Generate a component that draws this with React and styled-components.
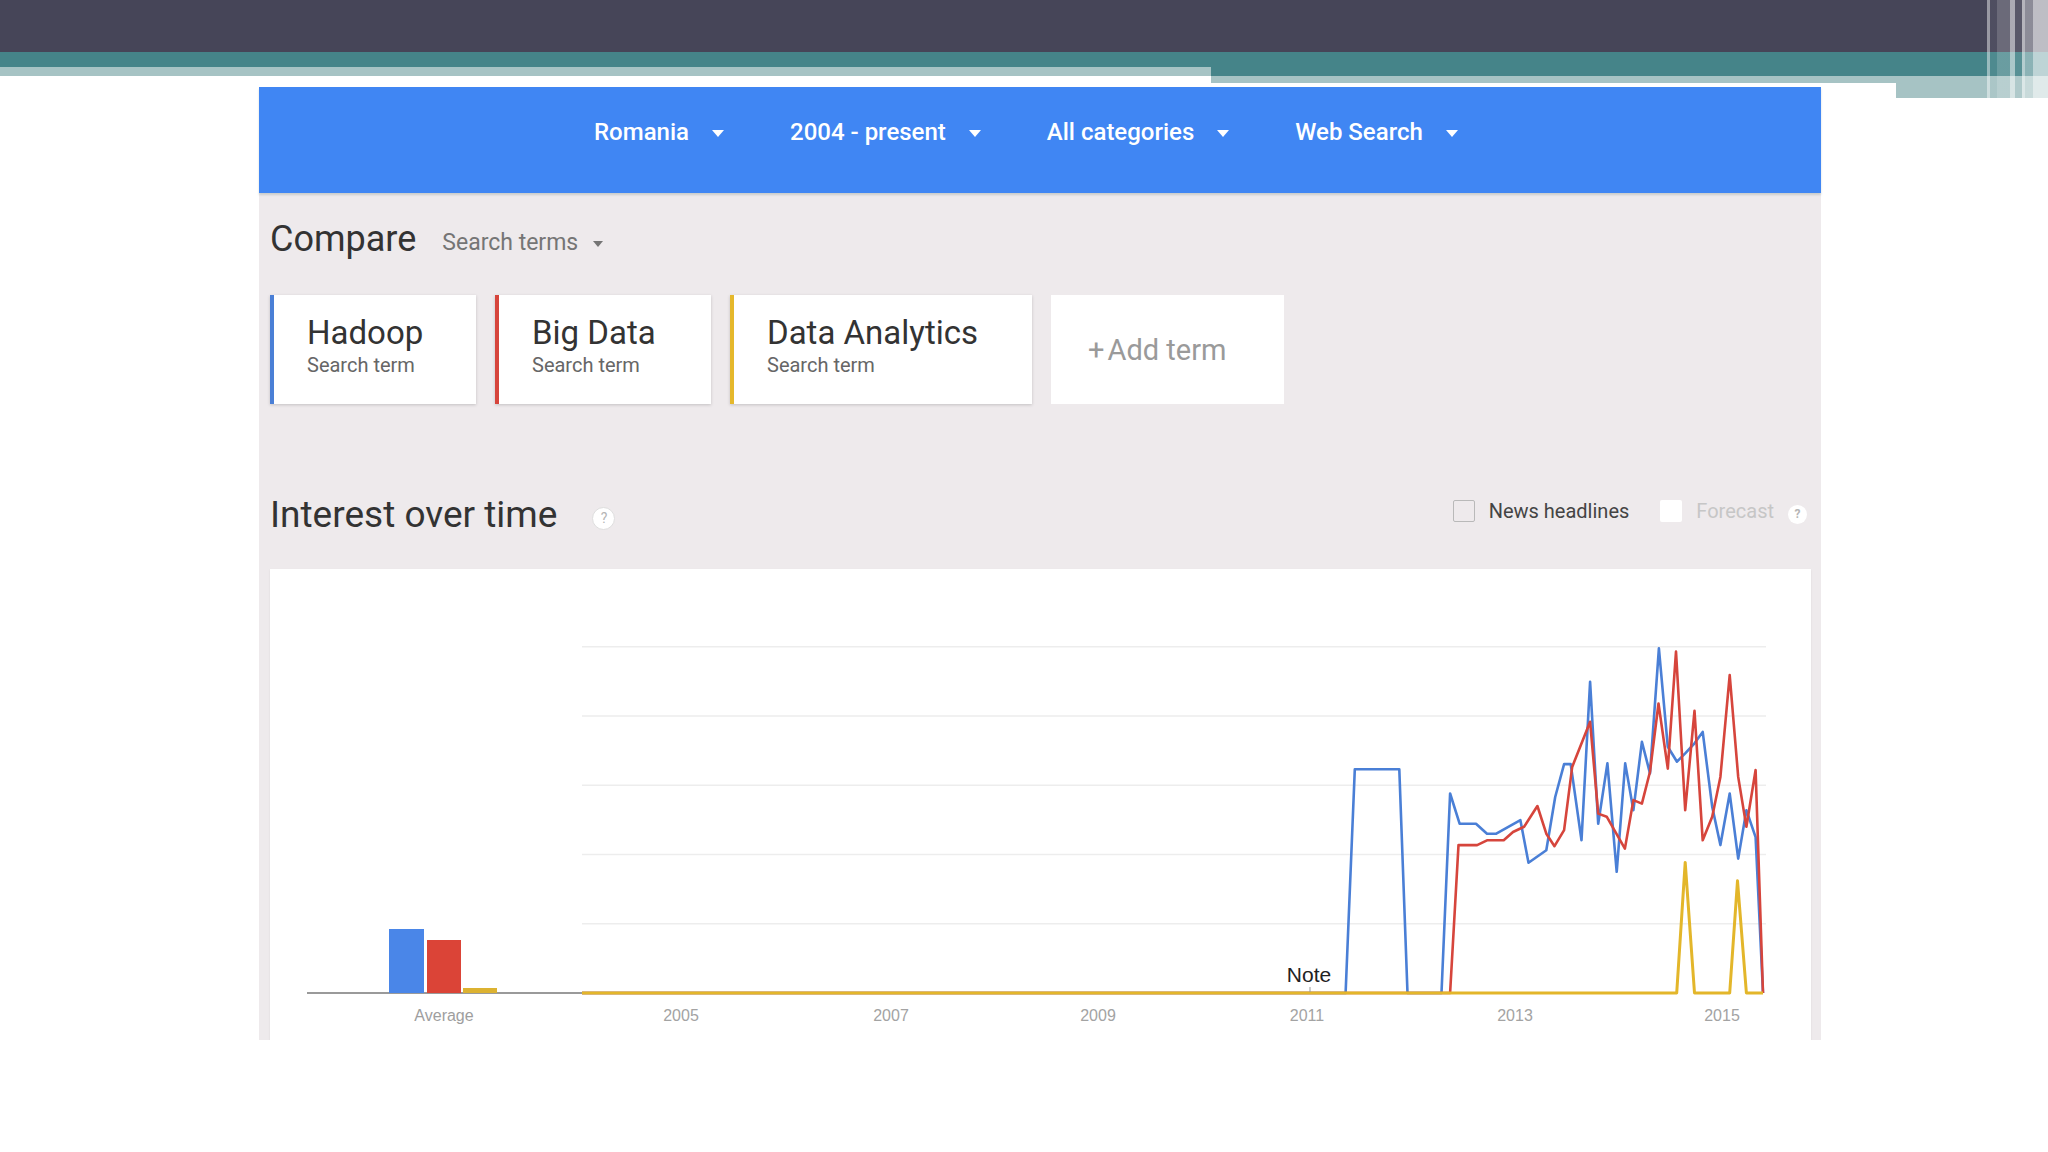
import React from 'react'
import styled, { createGlobalStyle } from 'styled-components'

const GlobalStyle = createGlobalStyle`
  html, body {
    margin: 0;
    padding: 0;
    background: #fff;
  }
  body {
    font-family: Roboto, "Liberation Sans", Arial, sans-serif;
  }
`

const NAV = ['Romania', '2004 - present', 'All categories', 'Web Search']

const TERMS = [
  { name: 'Hadoop', color: '#4a7fd6', width: 206 },
  { name: 'Big Data', color: '#d6453c', width: 216 },
  { name: 'Data Analytics', color: '#e5b82c', width: 302 },
]

const BLUE = [
  [312, 0], [1077, 0], [1086.3, 64.6], [1131.4, 64.6], [1139.7, 0], [1174.2, 0],
  [1182.9, 57.6], [1192.6, 48.9], [1209.2, 48.9], [1220.4, 46], [1229.8, 46],
  [1254.2, 49.9], [1262.5, 37.6], [1280.5, 41.2], [1289.5, 56.6], [1298.6, 66.1],
  [1305.3, 66.1], [1316.2, 44.1], [1324.9, 89.9], [1333.1, 48.9], [1342.5, 66.3],
  [1351.9, 35], [1360.5, 66.3], [1368.8, 52.8], [1377.5, 72.5], [1385.7, 63.4],
  [1394.7, 99.5], [1403.7, 71.1], [1413.1, 66.8], [1421.4, 69.2], [1430.8, 72.1],
  [1439.1, 75.4], [1448.8, 53.8], [1457.1, 42.7], [1466.5, 57.6], [1475.1, 38.8],
  [1483.4, 52.8], [1492.8, 45], [1500.3, 0],
]

const RED = [
  [312, 0], [1182.9, 0], [1191.5, 42.7], [1210.3, 42.7], [1220.4, 44.1],
  [1237.3, 44.1], [1246.7, 46.5], [1258, 48], [1271.5, 54], [1280.5, 46],
  [1288.8, 42.4], [1298.6, 47], [1306.8, 65.3], [1324.9, 78.3], [1333.1, 51.8],
  [1341.8, 50.9], [1360.2, 41.7], [1368.8, 55.7], [1377.5, 54.7], [1385.7, 63.9],
  [1394.3, 83.6], [1403.7, 64.8], [1412, 98.6], [1421.4, 52.8], [1430.8, 81.5],
  [1439.1, 44.1], [1448.8, 50.9], [1457.1, 62.4], [1466.5, 91.8], [1475.1, 62.4],
  [1483.4, 48], [1492.8, 64.4], [1500.3, 0],
]

const YELLOW = [
  [312, 0], [1412.8, 0], [1421.4, 37.7], [1430.8, 0], [1466.5, 0],
  [1474.4, 32.4], [1483.4, 0], [1500.3, 0],
]

const YEARS = [
  ['2005', 411], ['2007', 621], ['2009', 828],
  ['2011', 1037], ['2013', 1245], ['2015', 1452],
]

const BASE = 424
const yFor = (v) => BASE - v * 3.463
// the traced points were measured a touch wide on the right; pull them in
const xFor = (x) => (x > 980 ? 980 + (x - 980) * 0.986 : x)
const toPoints = (data) =>
  data.map(([x, v]) => `${xFor(x).toFixed(1)},${yFor(v).toFixed(1)}`).join(' ')

const LABEL_FONT = "'Liberation Sans', Arial, sans-serif"

const TrendChart = () => (
  <ChartSvg viewBox="0 0 1541 471" width="1541" height="471">
    {[100, 80, 60, 40, 20].map((v) => (
      <line key={v} x1="312" x2="1496" y1={yFor(v)} y2={yFor(v)} stroke="#ededed" strokeWidth="1.5" />
    ))}
    <line x1="37" x2="312" y1={BASE} y2={BASE} stroke="#9a9a9a" strokeWidth="2" />
    <rect x="119" y="360" width="35" height={BASE - 360} fill="#4a86e8" />
    <rect x="157" y="371" width="34" height={BASE - 371} fill="#db4437" />
    <rect x="193" y="419" width="34" height={BASE - 419} fill="#dcb231" />

    <polyline points={toPoints(BLUE)} fill="none" stroke="#4a7fd6" strokeWidth="2.6" strokeLinejoin="round" />
    <polyline points={toPoints(RED)} fill="none" stroke="#d6453c" strokeWidth="2.6" strokeLinejoin="round" />
    <polyline points={toPoints(YELLOW)} fill="none" stroke="#e3b62a" strokeWidth="3" strokeLinejoin="round" />

    <line x1="1040" x2="1040" y1="418" y2="423" stroke="#999" strokeWidth="1" />
    <text x="1039" y="413" textAnchor="middle" fontSize="21" fill="#222" fontFamily={LABEL_FONT}>Note</text>

    <text x="174" y="452" textAnchor="middle" fontSize="16" fill="#9e9e9e" fontFamily={LABEL_FONT}>Average</text>
    {YEARS.map(([label, x]) => (
      <text key={label} x={x} y="452" textAnchor="middle" fontSize="16" fill="#a3a3a3" fontFamily={LABEL_FONT}>
        {label}
      </text>
    ))}
  </ChartSvg>
)

const App = () => (
  <Page>
    <GlobalStyle />
    <SlideTop>
      <DarkBar />
      <Ribbon>
        <RibbonPart $w={1211}>
          <Band $h={15} $c="#458489" />
          <Band $h={9} $c="#a6c3c4" />
        </RibbonPart>
        <RibbonPart $w={685}>
          <Band $h={24} $c="#458489" />
          <Band $h={7} $c="#a6c3c4" />
        </RibbonPart>
        <RibbonPart $grow>
          <Band $h={24} $c="#458489" />
          <Band $h={22} $c="#a6c3c4" />
        </RibbonPart>
      </Ribbon>
      <Stripes />
    </SlideTop>

    <Main>
      <TopNav>
        {NAV.map((item) => (
          <NavItem key={item}>
            {item}
            <NavCaret />
          </NavItem>
        ))}
      </TopNav>

      <Panel>
        <CompareRow>
          <Heading>Compare</Heading>
          <SearchSelect>
            Search terms
            <SmallCaret />
          </SearchSelect>
        </CompareRow>

        <CardsRow>
          {TERMS.map((t) => (
            <TermCard key={t.name} $color={t.color} $w={t.width}>
              <TermTitle>{t.name}</TermTitle>
              <TermSub>Search term</TermSub>
            </TermCard>
          ))}
          <AddCard>
            <span>+</span>Add term
          </AddCard>
        </CardsRow>

        <InterestRow>
          <TitleGroup>
            <Heading $size={37}>Interest over time</Heading>
            <HelpIcon $size={23}>?</HelpIcon>
          </TitleGroup>
          <Controls>
            <CheckBox />
            <ControlLabel>News headlines</ControlLabel>
            <CheckBox $blank />
            <ControlLabel $muted>Forecast</ControlLabel>
            <HelpIcon $size={19} $flat>?</HelpIcon>
          </Controls>
        </InterestRow>

        <ChartCard>
          <TrendChart />
        </ChartCard>
      </Panel>
    </Main>
  </Page>
)

export default App

const Page = styled.div`
  width: 2048px;
  height: 1152px;
  overflow: hidden;
  position: relative;
  background: #fff;
`

const SlideTop = styled.div`
  height: 87px;
  position: relative;
`

const DarkBar = styled.div`
  height: 52px;
  background: #464558;
`

const Ribbon = styled.div`
  display: flex;
  align-items: flex-start;
`

const RibbonPart = styled.div`
  display: flex;
  flex-direction: column;
  width: ${(p) => (p.$w ? `${p.$w}px` : 'auto')};
  flex: ${(p) => (p.$grow ? 1 : 'none')};
`

const Band = styled.div`
  height: ${(p) => p.$h}px;
  background: ${(p) => p.$c};
`

const Stripes = styled.div`
  position: absolute;
  top: 0;
  right: 0;
  width: 61px;
  height: 98px;
  background: linear-gradient(
    90deg,
    rgba(255, 255, 255, 0.45) 0px,
    rgba(255, 255, 255, 0.45) 3px,
    rgba(255, 255, 255, 0.05) 3px,
    rgba(255, 255, 255, 0.05) 10px,
    rgba(255, 255, 255, 0.2) 10px,
    rgba(255, 255, 255, 0.2) 23px,
    rgba(255, 255, 255, 0.55) 23px,
    rgba(255, 255, 255, 0.55) 28px,
    rgba(255, 255, 255, 0.1) 28px,
    rgba(255, 255, 255, 0.1) 35px,
    rgba(255, 255, 255, 0.6) 35px,
    rgba(255, 255, 255, 0.6) 38px,
    rgba(255, 255, 255, 0.38) 38px,
    rgba(255, 255, 255, 0.38) 46px,
    rgba(255, 255, 255, 0.65) 46px,
    rgba(255, 255, 255, 0.65) 61px
  );
`

const Main = styled.div`
  margin-left: 259px;
  width: 1562px;
`

const TopNav = styled.div`
  position: relative;
  z-index: 1;
  box-sizing: border-box;
  height: 106px;
  padding: 31px 0 0 335px;
  display: flex;
  align-items: flex-start;
  gap: 66px;
  background: #4086f3;
  box-shadow: 0 2px 2px rgba(60, 90, 80, 0.2);
`

const NavItem = styled.div`
  display: flex;
  align-items: center;
  gap: 23px;
  color: #fff;
  font-size: 24px;
  font-weight: 500;
  line-height: 28px;
  white-space: nowrap;
`

const NavCaret = styled.span`
  width: 0;
  height: 0;
  margin-top: 3px;
  border-left: 6px solid transparent;
  border-right: 6px solid transparent;
  border-top: 7px solid #fff;
`

const Panel = styled.div`
  box-sizing: border-box;
  height: 847px;
  padding: 27px 10px 0 11px;
  background: #eeeaec;
  overflow: hidden;
`

const CompareRow = styled.div`
  height: 40px;
  display: flex;
  align-items: center;
`

const Heading = styled.div`
  font-size: ${(p) => p.$size || 36}px;
  color: #333;
  line-height: 1.2;
  white-space: nowrap;
`

const SearchSelect = styled.div`
  display: flex;
  align-items: center;
  gap: 15px;
  margin: 5px 0 0 26px;
  font-size: 23px;
  color: #757575;
`

const SmallCaret = styled.span`
  width: 0;
  height: 0;
  margin-top: 3px;
  border-left: 5px solid transparent;
  border-right: 5px solid transparent;
  border-top: 6px solid #757575;
`

const CardsRow = styled.div`
  margin-top: 35px;
  display: flex;
  gap: 19px;
  height: 109px;
`

const TermCard = styled.div`
  box-sizing: border-box;
  width: ${(p) => p.$w}px;
  height: 109px;
  padding: 19px 0 0 33px;
  background: #fff;
  border-left: 4px solid ${(p) => p.$color};
  box-shadow: 0 1px 3px rgba(0, 0, 0, 0.18);
`

const TermTitle = styled.div`
  font-size: 33px;
  line-height: 37px;
  color: #333;
  white-space: nowrap;
`

const TermSub = styled.div`
  margin-top: 3px;
  font-size: 20px;
  line-height: 23px;
  color: #666;
`

const AddCard = styled.div`
  box-sizing: border-box;
  width: 233px;
  height: 109px;
  padding-left: 37px;
  display: flex;
  align-items: center;
  background: #fff;
  font-size: 29px;
  color: #9a9a9a;
  white-space: nowrap;

  span {
    margin-right: 3px;
  }
`

const InterestRow = styled.div`
  margin-top: 89px;
  height: 44px;
  display: flex;
  align-items: center;
  justify-content: space-between;
  padding-right: 4px;
`

const TitleGroup = styled.div`
  display: flex;
  align-items: center;
  gap: 35px;
`

const HelpIcon = styled.span`
  box-sizing: border-box;
  width: ${(p) => p.$size}px;
  height: ${(p) => p.$size}px;
  margin-top: 6px;
  border-radius: 50%;
  display: inline-flex;
  align-items: center;
  justify-content: center;
  background: #fff;
  border: ${(p) => (p.$flat ? 'none' : '1px solid #dedede')};
  color: #b5b5b5;
  font-size: ${(p) => Math.round(p.$size * 0.62)}px;
  font-weight: ${(p) => (p.$flat ? 700 : 400)};
  margin-left: ${(p) => (p.$flat ? 14 : 0)}px;
`

const Controls = styled.div`
  display: flex;
  align-items: center;
  margin-bottom: 8px;
`

const CheckBox = styled.span`
  box-sizing: border-box;
  width: 22px;
  height: 22px;
  margin-right: 14px;
  margin-left: ${(p) => (p.$blank ? 31 : 0)}px;
  border-radius: 2px;
  background: ${(p) => (p.$blank ? '#fff' : 'transparent')};
  border: ${(p) => (p.$blank ? 'none' : '1.5px solid #b9b9b9')};
`

const ControlLabel = styled.span`
  font-size: 20px;
  color: ${(p) => (p.$muted ? '#c6c6c6' : '#444')};
  white-space: nowrap;
`

const ChartCard = styled.div`
  margin-top: 32px;
  height: 471px;
  background: #fff;
  box-shadow: 0 1px 2px rgba(0, 0, 0, 0.08);
`

const ChartSvg = styled.svg`
  display: block;
`
